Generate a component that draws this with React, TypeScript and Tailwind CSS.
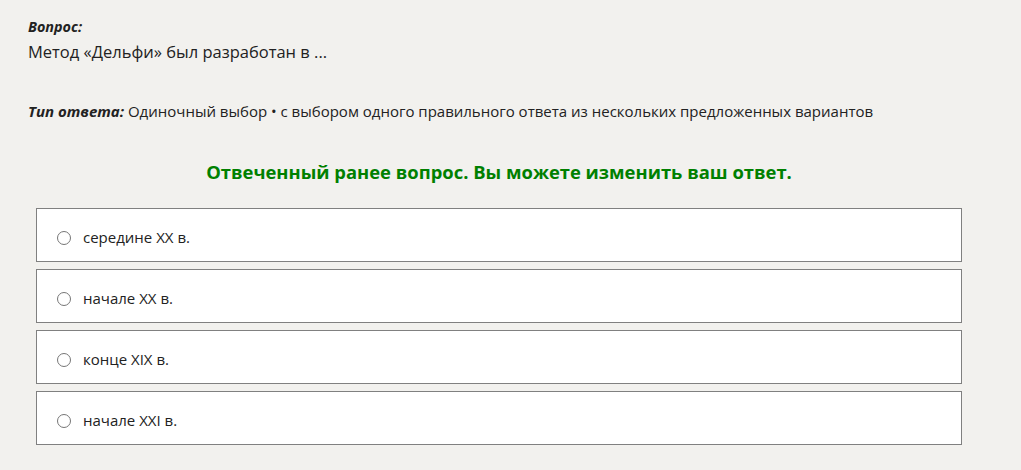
const options = ['середине XX в.', 'начале XX в.', 'конце XIX в.', 'начале XXI в.'];

export default function App() {
  return (
    <div className="min-h-[470px] w-full bg-[#f2f1ee] text-[#222] font-['Open_Sans',sans-serif]">
      <div className="w-[942px] ml-[28px] pt-[17px]">
        {/* question */}
        <div className="text-[14.4px] leading-[20px] font-bold italic text-[#222]">Вопрос:</div>
        <div className="text-[16.5px] leading-[24px] mt-[3px]">Метод «Дельфи» был разработан в ...</div>

        <div className="mt-[36px] text-[15px] leading-[22px]">
          <span className="font-bold italic">Тип ответа:</span> Одиночный выбор • с выбором одного правильного ответа из нескольких предложенных вариантов
        </div>

        <div className="mt-[37px] text-center text-[18.4px] leading-[26px] font-bold text-[#008000]">
          Отвеченный ранее вопрос. Вы можете изменить ваш ответ.
        </div>

        {/* options */}
        <div className="mx-2 mt-[23px] flex flex-col gap-[7px]">
          {options.map((o) => (
            <label key={o} className="h-[54px] bg-white border border-[#808080] flex items-center pl-[20px] pt-[5px] gap-[12px] text-[15px]">
              <span className="w-[14px] h-[14px] rounded-full border border-[#767676] bg-white shrink-0" />
              <span>{o}</span>
            </label>
          ))}
        </div>
      </div>
    </div>
  );
}
